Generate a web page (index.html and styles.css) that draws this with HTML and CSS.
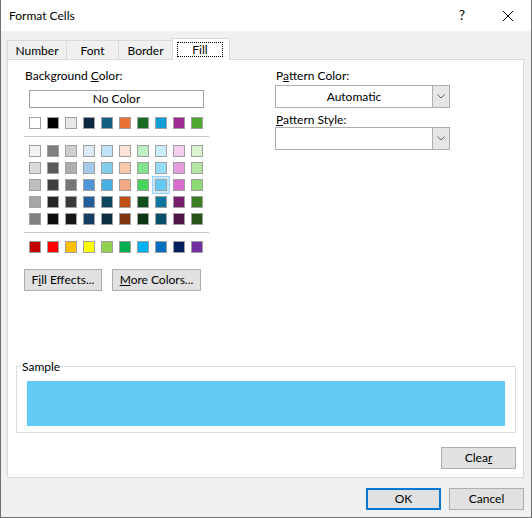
FILE: index.html
```html
<!DOCTYPE html>
<html lang="en">
<head>
<meta charset="utf-8">
<title>Format Cells</title>
<link rel="stylesheet" href="styles.css">
</head>
<body>
<div class="window">
  <div class="titlebar">
    <div class="title">Format Cells</div>
    <div class="tb-btn help">?</div>
    <div class="tb-btn close"><svg width="10" height="10" viewBox="0 0 10 10"><path d="M0 0L10 10M10 0L0 10" stroke="#000" stroke-width="1" fill="none"/></svg></div>
  </div>
  <div class="client">
    <div class="tabs">
      <div class="tab t-number">Number</div>
      <div class="tab t-font">Font</div>
      <div class="tab t-border">Border</div>
      <div class="tab active"><div class="focus">Fill</div></div>
    </div>
    <div class="panel">
      <div class="top">
        <div class="bgcol">
          <div class="label">Background <u>C</u>olor:</div>
          <div class="nocolor">No Color</div>
          <div class="swrow first">
            <span class="sw" style="background:#ffffff"></span><span class="sw" style="background:#000000"></span><span class="sw" style="background:#e8e8e8"></span><span class="sw" style="background:#0e2841"></span><span class="sw" style="background:#156082"></span><span class="sw" style="background:#e97132"></span><span class="sw" style="background:#196b24"></span><span class="sw" style="background:#0f9ed5"></span><span class="sw" style="background:#a02b93"></span><span class="sw" style="background:#4ea72e"></span>
          </div>
          <div class="sep"></div>
          <div class="grid">
            <div class="swrow">
              <span class="sw" style="background:#f2f2f2"></span><span class="sw" style="background:#7f7f7f"></span><span class="sw" style="background:#d0d0d0"></span><span class="sw" style="background:#dceaf7"></span><span class="sw" style="background:#c0e4f5"></span><span class="sw" style="background:#fbe3d6"></span><span class="sw" style="background:#c1f0c8"></span><span class="sw" style="background:#caeefb"></span><span class="sw" style="background:#f2ceef"></span><span class="sw" style="background:#d9f2d0"></span>
            </div>
            <div class="swrow">
              <span class="sw" style="background:#d9d9d9"></span><span class="sw" style="background:#595959"></span><span class="sw" style="background:#adadad"></span><span class="sw" style="background:#a6c9ec"></span><span class="sw" style="background:#83cceb"></span><span class="sw" style="background:#f7c7ac"></span><span class="sw" style="background:#83e28e"></span><span class="sw" style="background:#95dcf8"></span><span class="sw" style="background:#e49edd"></span><span class="sw" style="background:#b4e5a2"></span>
            </div>
            <div class="swrow">
              <span class="sw" style="background:#bfbfbf"></span><span class="sw" style="background:#404040"></span><span class="sw" style="background:#757575"></span><span class="sw" style="background:#4e95d9"></span><span class="sw" style="background:#45b0e1"></span><span class="sw" style="background:#f1a983"></span><span class="sw" style="background:#47d45a"></span><span class="sw selected" style="background:#61cbf3"></span><span class="sw" style="background:#d86dcd"></span><span class="sw" style="background:#8ed973"></span>
            </div>
            <div class="swrow">
              <span class="sw" style="background:#a6a6a6"></span><span class="sw" style="background:#262626"></span><span class="sw" style="background:#3a3a3a"></span><span class="sw" style="background:#215f9a"></span><span class="sw" style="background:#0f4761"></span><span class="sw" style="background:#c04f15"></span><span class="sw" style="background:#124f1a"></span><span class="sw" style="background:#0b769f"></span><span class="sw" style="background:#77206d"></span><span class="sw" style="background:#3a7d22"></span>
            </div>
            <div class="swrow">
              <span class="sw" style="background:#808080"></span><span class="sw" style="background:#0d0d0d"></span><span class="sw" style="background:#171717"></span><span class="sw" style="background:#153d64"></span><span class="sw" style="background:#0a2f40"></span><span class="sw" style="background:#80340e"></span><span class="sw" style="background:#0c3511"></span><span class="sw" style="background:#074f6a"></span><span class="sw" style="background:#4f1548"></span><span class="sw" style="background:#275317"></span>
            </div>
          </div>
          <div class="sep"></div>
          <div class="swrow std">
            <span class="sw" style="background:#c00000"></span><span class="sw" style="background:#ff0000"></span><span class="sw" style="background:#ffc000"></span><span class="sw" style="background:#ffff00"></span><span class="sw" style="background:#92d050"></span><span class="sw" style="background:#00b050"></span><span class="sw" style="background:#00b0f0"></span><span class="sw" style="background:#0070c0"></span><span class="sw" style="background:#002060"></span><span class="sw" style="background:#7030a0"></span>
          </div>
          <div class="btnrow">
            <button class="btn b-fill">F<u>i</u>ll Effects...</button>
            <button class="btn b-more"><u>M</u>ore Colors...</button>
          </div>
        </div>
        <div class="patcol">
          <div class="label">P<u>a</u>ttern Color:</div>
          <div class="combo c1">
            <div class="val">Automatic</div>
            <div class="arrow"><svg width="8" height="5" viewBox="0 0 8 5"><path d="M0.5 0.5L4 4L7.5 0.5" stroke="#606060" stroke-width="1" fill="none"/></svg></div>
          </div>
          <div class="label l2"><u>P</u>attern Style:</div>
          <div class="combo">
            <div class="val"></div>
            <div class="arrow"><svg width="8" height="5" viewBox="0 0 8 5"><path d="M0.5 0.5L4 4L7.5 0.5" stroke="#606060" stroke-width="1" fill="none"/></svg></div>
          </div>
        </div>
      </div>
      <fieldset class="sample">
        <legend>Sample</legend>
        <div class="samplefill"></div>
      </fieldset>
      <div class="clearrow">
        <button class="btn">Clea<u>r</u></button>
      </div>
    </div>
    <div class="footer">
      <button class="btn ok">OK</button>
      <button class="btn">Cancel</button>
    </div>
  </div>
</div>
</body>
</html>
```

FILE: styles.css
```css
* { box-sizing: border-box; }
html, body { margin: 0; padding: 0; background: #ffffff; }
body {
  font-family: Lato, "Liberation Sans", sans-serif;
  font-size: 12px;
  line-height: 15px;
  color: #000;
}
u { text-underline-offset: 1px; }

.window {
  width: 532px;
  height: 518px;
  border: 1px solid #6f6f6f;
  border-top: 0;
  background: #f0f0f0;
  display: flex;
  flex-direction: column;
}

.titlebar {
  height: 31px;
  background: #fff;
  display: flex;
  flex: none;
}
.title { flex: 1; padding: 8px 0 0 8px; }
.tb-btn {
  width: 46px;
  height: 31px;
  display: flex;
  align-items: center;
  justify-content: center;
}
.help { font-size: 14px; padding-bottom: 2px; }

.client { flex: 1; padding: 7px 7px 0 6px; }

.tabs { display: flex; align-items: flex-end; height: 21px; }
.tab {
  height: 19px;
  border: 1px solid #d9d9d9;
  border-right: 0;
  border-bottom: 0;
  text-align: center;
  padding-top: 2px;
}
.t-number { width: 59px; }
.t-font { width: 52px; }
.t-border { width: 54px; }
.tab.active {
  width: 58px;
  height: 22px;
  margin-bottom: -1px;
  background: #fff;
  border-right: 1px solid #d9d9d9;
  padding: 3px 6px 0 4px;
  position: relative;
  z-index: 1;
}
.focus { border: 1px dotted #000; height: 15px; line-height: 13px; }

.panel {
  background: #fff;
  border: 1px solid #d9d9d9;
  padding: 0 7px 8px 8px;
}

.top { display: flex; align-items: flex-start; }
.bgcol { margin-left: 8px; width: 185px; padding-top: 8px; }
.label { padding-left: 1px; height: 15px; }
.nocolor {
  margin: 7px 0 0 5px;
  width: 175px;
  height: 18px;
  border: 1px solid #a0a0a0;
  background: #fff;
  text-align: center;
  line-height: 16px;
}
.swrow { display: flex; gap: 6px; padding-left: 5px; }
.swrow.first { margin-top: 9px; }
.sw {
  width: 12px;
  height: 12px;
  border: 1px solid #a0a0a0;
  flex: none;
}
.sw.selected { box-shadow: 0 0 0 2px #cce8ff, 0 0 0 3px #99d1ff; }
.sep { height: 1px; background: #c8c8c8; margin-top: 7px; }
.grid { display: flex; flex-direction: column; gap: 5px; margin-top: 8px; }
.swrow.std { margin-top: 8px; }

.btnrow { display: flex; gap: 10px; margin-top: 16px; }
.btn {
  font: inherit;
  color: #000;
  height: 22px;
  padding: 0;
  line-height: 20px;
  background: #e1e1e1;
  border: 1px solid #adadad;
  width: 75px;
  text-align: center;
}
.b-fill { width: 78px; }
.b-more { width: 89px; }

.patcol { margin-left: 66px; width: 175px; padding-top: 8px; }
.combo {
  display: flex;
  width: 175px;
  height: 23px;
  border: 1px solid #adadad;
  background: #fff;
}
.combo.c1 { margin-top: 2px; }
.label.l2 { margin-top: 4px; }
.combo .val { flex: 1; text-align: center; line-height: 21px; }
.combo .arrow {
  width: 17px;
  border-left: 1px solid #adadad;
  background: #e6e6e6;
  display: flex;
  align-items: center;
  justify-content: center;
}

.sample {
  margin: 68px 0 0 0;
  width: 500px;
  min-width: 0;
  border: 1px solid #dcdcdc;
  padding: 7px 10px 6px 10px;
}
.sample legend { padding: 0 1px; margin-left: -6px; line-height: 15px; }
.samplefill { height: 45px; background: #61cbf3; }

.clearrow { display: flex; justify-content: flex-end; margin-top: 14px; }

.footer { display: flex; justify-content: flex-end; gap: 8px; margin-top: 10px; }
.btn.ok { border: 2px solid #0078d7; line-height: 18px; }
```
